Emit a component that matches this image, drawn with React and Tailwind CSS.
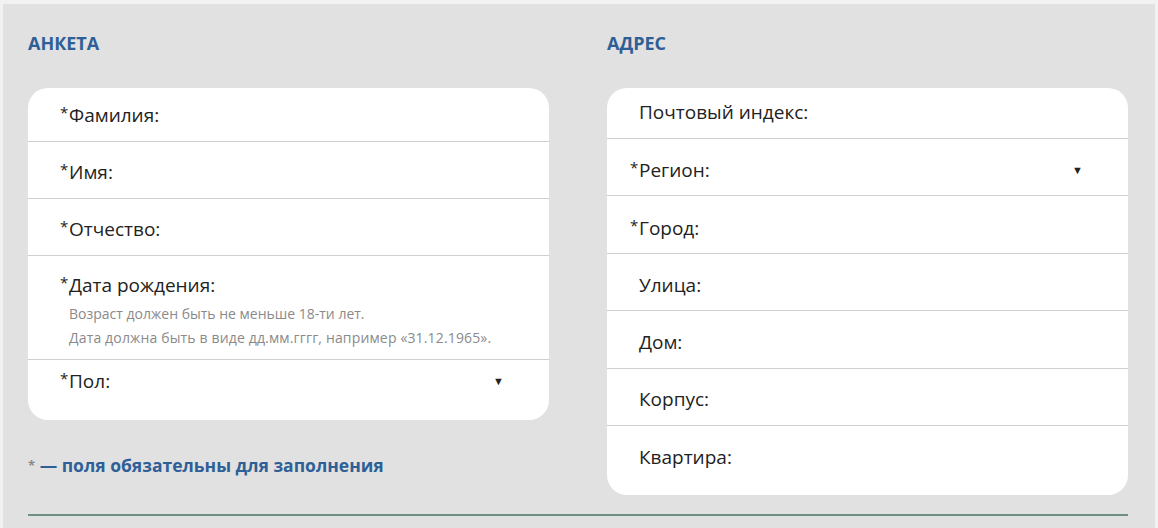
import React from "react";

const font = { fontFamily: "'Open Sans', 'Noto Sans', sans-serif" };

function Row({ label, req, select, className = "", pad = "pl-[41px]", children }) {
  return (
    <div className={`border-b border-[#cfcfcf] last:border-b-0 ${pad} pr-[45px] ${className}`}>
      <div className="flex items-center justify-between h-[24px]">
        <span className="relative text-[19px] leading-[24px] text-[#222]">
          {req && <span className="absolute -left-[9px] top-[-3px] text-[15px]">*</span>}
          {label}
        </span>
        {select && <span className="text-[11px] text-[#222]">▼</span>}
      </div>
      {children}
    </div>
  );
}

export default function App() {
  return (
    <div className="w-[1158px] h-[528px] bg-[#f2f2f2] overflow-hidden" style={font}>
      <div className="ml-[3px] mt-[4px] w-[1152px] h-[524px] bg-[#e1e1e1] pl-[25px] pr-[27px] pt-[27px]">
        <div className="flex gap-[58px]">
          <div className="w-[521px]">
            <h2 className="text-[18px] font-bold text-[#2e5f96] leading-[24px]">АНКЕТА</h2>
            <div className="mt-[33px] bg-white rounded-[20px]">
              <Row label="Фамилия:" req className="h-[54px] pt-[15px]" />
              <Row label="Имя:" req className="h-[57px] pt-[18px]" />
              <Row label="Отчество:" req className="h-[57px] pt-[18px]" />
              <Row label="Дата рождения:" req className="h-[104px] pt-[17px]">
                <div className="mt-[5px] text-[14px] leading-[24px] text-[#8a8a8a]">
                  <div>Возраст должен быть не меньше 18-ти лет.</div>
                  <div className="tracking-[0.15px]">Дата должна быть в виде дд.мм.гггг, например «31.12.1965».</div>
                </div>
              </Row>
              <Row label="Пол:" req select className="h-[60px] pt-[9px]" />
            </div>
            <p className="mt-[33px] text-[17.5px] font-bold text-[#2e5f96] leading-[24px]">
              <span className="text-[13px] text-[#8a8a8a] align-top">*</span> — поля обязательны для заполнения
            </p>
          </div>
          <div className="w-[521px]">
            <h2 className="text-[18px] font-bold text-[#2e5f96] leading-[24px]">АДРЕС</h2>
            <div className="mt-[33px] bg-white rounded-[20px]">
              <Row pad="pl-[32px]" label="Почтовый индекс:" className="h-[51px] pt-[12px]" />
              <Row pad="pl-[32px]" label="Регион:" req select className="h-[57px] pt-[19px]" />
              <Row pad="pl-[32px]" label="Город:" req className="h-[58px] pt-[20px]" />
              <Row pad="pl-[32px]" label="Улица:" className="h-[57px] pt-[19px]" />
              <Row pad="pl-[32px]" label="Дом:" className="h-[58px] pt-[19px]" />
              <Row pad="pl-[32px]" label="Корпус:" className="h-[57px] pt-[18px]" />
              <Row pad="pl-[32px]" label="Квартира:" className="h-[69px] pt-[19px]" />
            </div>
          </div>
        </div>
        <div className="mt-[19px] h-[2px] bg-[#6f8f84]" />
      </div>
    </div>
  );
}
